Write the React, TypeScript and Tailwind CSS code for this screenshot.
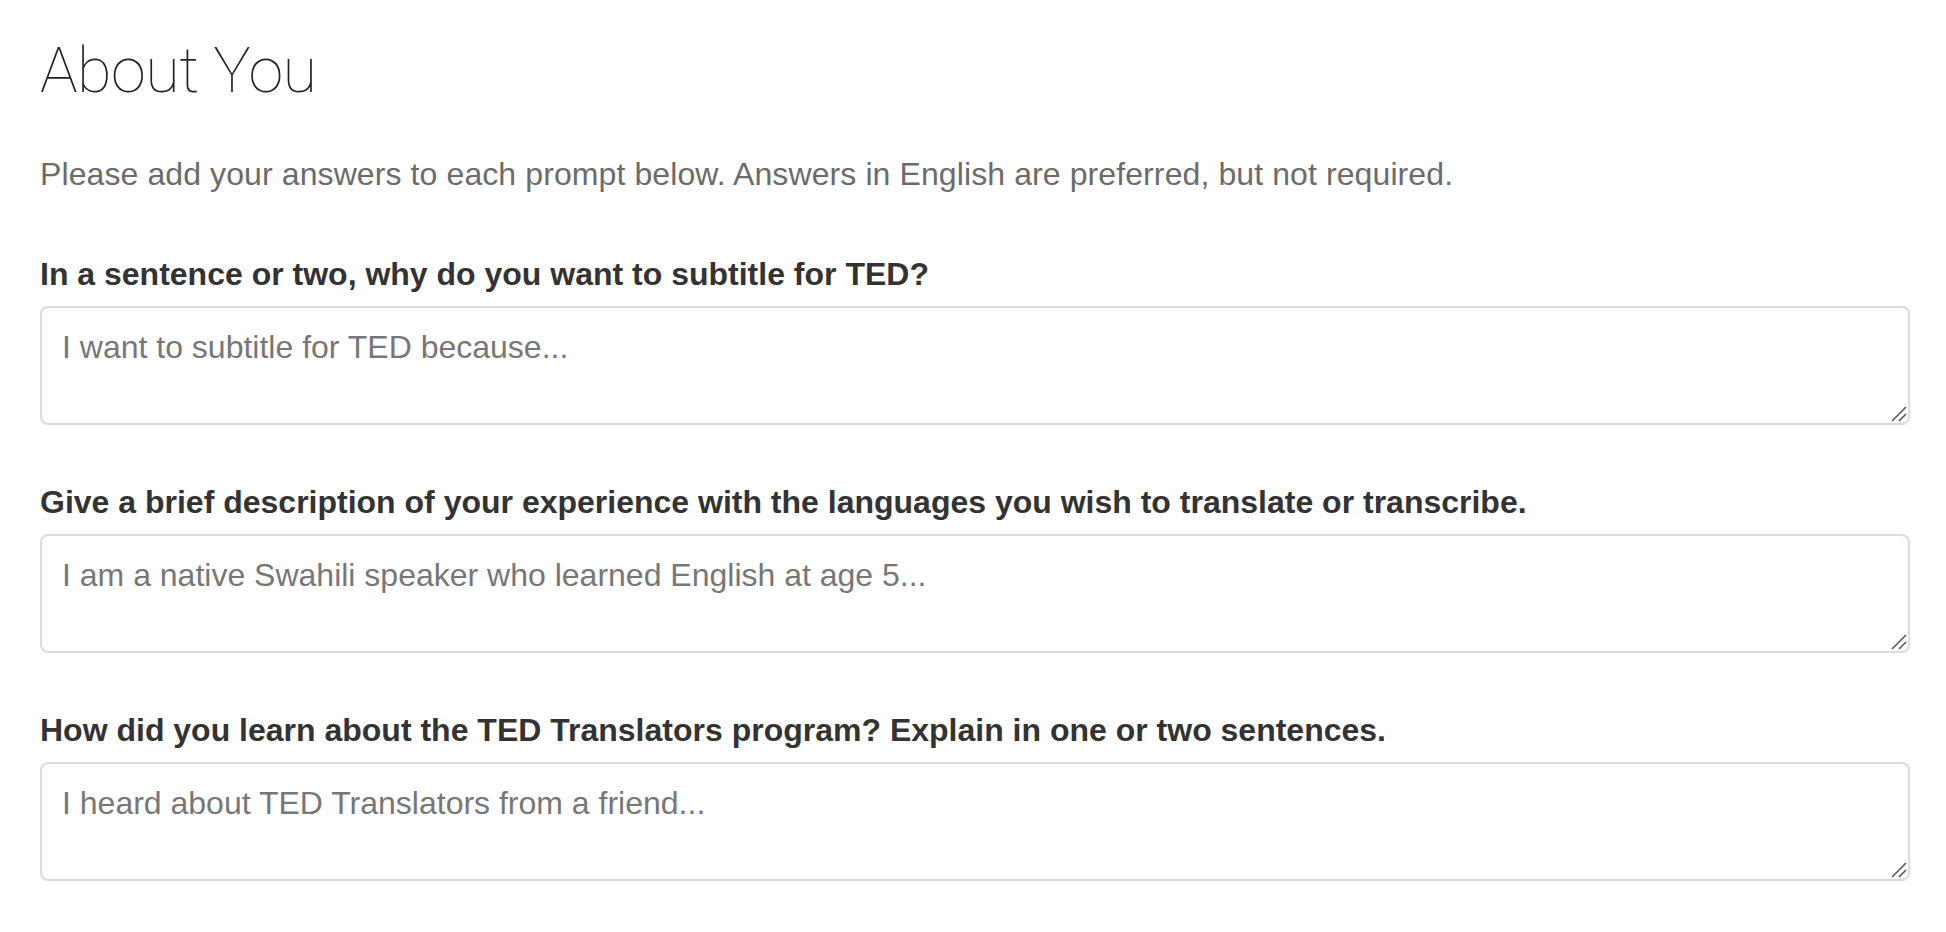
const prompts = [
  {
    label: "In a sentence or two, why do you want to subtitle for TED?",
    placeholder: "I want to subtitle for TED because...",
  },
  {
    label: "Give a brief description of your experience with the languages you wish to translate or transcribe.",
    placeholder: "I am a native Swahili speaker who learned English at age 5...",
  },
  {
    label: "How did you learn about the TED Translators program? Explain in one or two sentences.",
    placeholder: "I heard about TED Translators from a friend...",
  },
];

function Grip() {
  return (
    <svg
      className="pointer-events-none absolute right-[3px] bottom-[3px]"
      width="16"
      height="16"
      viewBox="0 0 16 16"
    >
      <path d="M1 15 L15 1 M8 15 L15 8" stroke="#5a5a5a" strokeWidth="1.6" strokeLinecap="butt" />
    </svg>
  );
}

export default function App() {
  return (
    <div className="min-h-screen bg-white pt-9 pl-10 pr-[36px] font-['Liberation_Sans',Arial,sans-serif] text-[#333]">
      <h1 className="font-['Roboto',sans-serif] font-thin text-[63px] leading-[1.1] text-[#222] tracking-[-0.5px]">
        About You
      </h1>
      <p className="mt-[46px] text-[32px] leading-[46px] tracking-[0.1px] text-[#6b6b6b]">
        Please add your answers to each prompt below. Answers in English are preferred, but not required.
      </p>
      {prompts.map((p, i) => (
        <div key={i} className="mt-[54px] flex flex-col">
          <label htmlFor={`prompt-${i}`} className="mb-[9px] text-[32px] leading-[46px] font-bold text-[#333]">
            {p.label}
          </label>
          <div className="relative">
            <textarea
              id={`prompt-${i}`}
              placeholder={p.placeholder}
              className="block h-[119px] w-full resize-none rounded-[8px] border-2 border-[#dcdcdc] bg-white px-5 pt-4 text-[32px] leading-[46px] text-[#333] placeholder:text-[#777] outline-none"
            />
            <Grip />
          </div>
        </div>
      ))}
    </div>
  );
}
